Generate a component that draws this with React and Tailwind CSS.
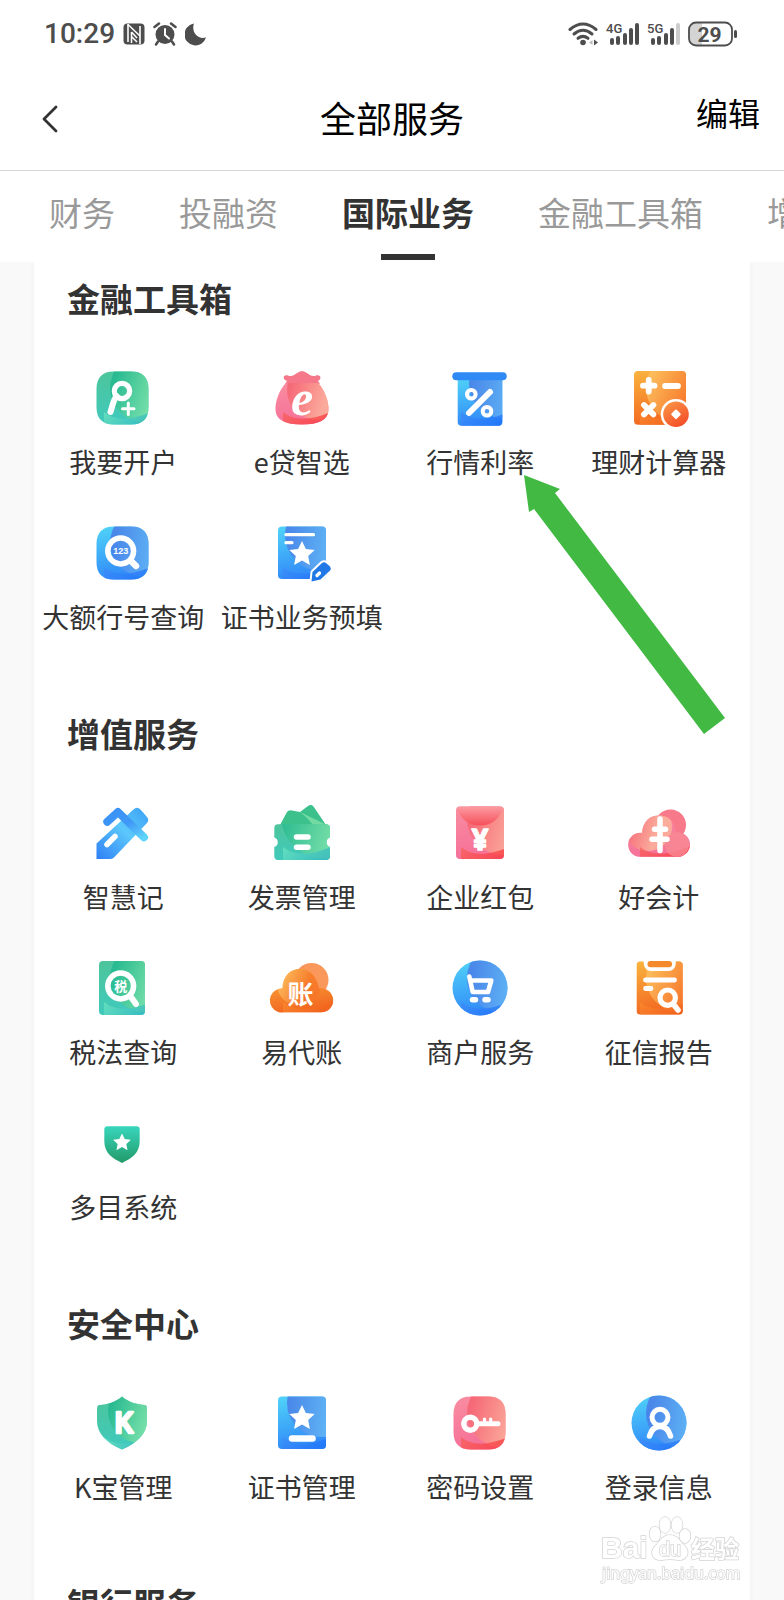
import { useState } from "react";

const STAR = "M0 -13 L3.9 -4.9 L12.7 -3.9 L6.2 2.1 L7.9 10.9 L0 6.6 L-7.9 10.9 L-6.2 2.1 L-12.7 -3.9 L-3.9 -4.9 Z";
const CJK = "'Noto Sans CJK SC', sans-serif";

const tones = {
  green: { base: ["#4cc59c", "#3fcabf"], inner: ["#22b88e", "#86e6a6"], deep: ["#6fe6c0", "#2fb4c0"] },
  blue: { base: ["#4fd0f8", "#2f86f8"], inner: ["#4a78e6", "#68b8f4"], deep: ["#3f8cf8", "#1c72fa"] },
  pink: { base: ["#f98ba0", "#f56f98"], inner: ["#f5626e", "#fcb69a"], deep: ["#f8625c", "#f9363c"] },
  orange: { base: ["#f9b03c", "#f26420"], inner: ["#fdbf62", "#f7752a"], deep: ["#fb8a2e", "#f0601c"] },
};

function Gradients() {
  return (
    <svg width="0" height="0" className="absolute" aria-hidden="true">
      <defs>
        {Object.entries(tones).map(([name, t]) => (
          <g key={name}>
            <linearGradient id={`${name}-base`} x1="0.3" y1="0" x2="0.5" y2="1">
              <stop offset="0" stopColor={t.base[0]} /><stop offset="1" stopColor={t.base[1]} />
            </linearGradient>
            <linearGradient id={`${name}-inner`} x1="0.1" y1="0.3" x2="0.7" y2="0.5">
              <stop offset="0" stopColor={t.inner[0]} /><stop offset="1" stopColor={t.inner[1]} />
            </linearGradient>
            <linearGradient id={`${name}-deep`} x1="0" y1="0" x2="1" y2="0.4">
              <stop offset="0" stopColor={t.deep[0]} /><stop offset="1" stopColor={t.deep[1]} />
            </linearGradient>
          </g>
        ))}
        <linearGradient id="pencil" x1="0" y1="1" x2="1" y2="0">
          <stop offset="0" stopColor="#2f7ff6" /><stop offset="0.55" stopColor="#5cc8fb" /><stop offset="1" stopColor="#3aa0f5" />
        </linearGradient>
        <linearGradient id="cross" x1="0" y1="0" x2="1" y2="1">
          <stop offset="0" stopColor="#3a92f6" /><stop offset="0.5" stopColor="#3f97f6" /><stop offset="1" stopColor="#5ed4fa" />
        </linearGradient>
        <linearGradient id="flap" x1="0" y1="0" x2="0" y2="1">
          <stop offset="0" stopColor="#fb9ba2" /><stop offset="1" stopColor="#f6505a" />
        </linearGradient>
        <linearGradient id="coin" x1="0" y1="0" x2="0.6" y2="1">
          <stop offset="0" stopColor="#fa9a48" /><stop offset="1" stopColor="#f4502a" />
        </linearGradient>
        <linearGradient id="badge" x1="0" y1="0" x2="0" y2="1">
          <stop offset="0" stopColor="#38d6bd" /><stop offset="1" stopColor="#229a68" />
        </linearGradient>
      </defs>
    </svg>
  );
}

// Coloured body of an icon: base, lighter disc on the right, darker swoosh at the bottom
function Body({ id, tone, d, disc = [54, 22, 34] }) {
  return (
    <>
      <clipPath id={id}><path d={d} /></clipPath>
      <path d={d} fill={`url(#${tone}-base)`} />
      <g clipPath={`url(#${id})`}>
        <circle cx={disc[0]} cy={disc[1]} r={disc[2]} fill={`url(#${tone}-inner)`} opacity="0.8" />
        <path d="M14 46 C26 56 44 54 64 45 V64 H14 Z" fill={`url(#${tone}-deep)`} opacity="0.75" />
      </g>
    </>
  );
}

const SQUIRCLE = "M24 5.5 H41 Q58.500 5.500 58.500 23 V41 Q58.500 58.500 41 58.500 H24 Q6.500 58.500 6.500 41 V23 Q6.500 5.500 24 5.500 Z";
const CARD = "M13 5.500 H53 Q57 5.500 57 9.500 V54 Q57 58 53 58 H13 Q9 58 9 54 V9.500 Q9 5.500 13 5.500 Z";
const DISC = "M33 4.500 A27.500 27.500 0 0 1 33 59.500 A27.500 27.500 0 0 1 33 4.500 Z";

const white = { fill: "none", stroke: "#fff", strokeLinecap: "round", strokeLinejoin: "round" };

const icons = {
  account: (
    <>
      <Body id="c-account" tone="green" d={SQUIRCLE} />
      <g {...white}>
        <circle cx="32" cy="25" r="7.700" strokeWidth="5.200" />
        <path d="M26.500 30 C23 35 22.500 40 20.500 46" strokeWidth="6" />
        <path d="M32.500 42.700 H44 M38.300 37 V48.500" strokeWidth="3" />
      </g>
    </>
  ),
  bag: (
    <>
      <path d="M16 18 L18 15 C13 13 14 8 19 9.500 C23 11 25 9 29 6.500 Q33 3.500 37 6.500 C41 9 43 11 47 9.500 C52 8 53 13 49 15 L51 18 Z" fill="#f4788a" />
      <Body id="c-bag" tone="pink" d="M17 17 H49 C56 24 60 36 59.500 44 C59 54 50 58.500 33 58.500 C16 58.500 7 54 6.500 44 C6 36 10 24 17 17 Z" disc={[48, 24, 30]} />
      <text x="33" y="49" textAnchor="middle" fontFamily="'Liberation Serif', serif" fontStyle="italic" fontWeight="700" fontSize="50" fill="#fff">e</text>
    </>
  ),
  rate: (
    <>
      <Body id="c-rate" tone="blue" d="M10.700 11 H55.300 V56 Q55.300 59.700 51.500 59.700 H14.500 Q10.700 59.700 10.700 56 Z" disc={[56, 18, 34]} />
      <rect x="5.300" y="6.300" width="54.400" height="8" rx="4" fill="#2f8af5" />
      <g {...white}>
        <circle cx="24.300" cy="28.300" r="4.300" strokeWidth="4" />
        <circle cx="40" cy="45.300" r="4.300" strokeWidth="4" />
        <path d="M43 26 L22 47" strokeWidth="6" />
      </g>
    </>
  ),
  calc: (
    <>
      <Body id="c-calc" tone="orange" d="M12 5 H56 Q60 5 60 9 V54.700 Q60 58.700 56 58.700 H12 Q8 58.700 8 54.700 V9 Q8 5 12 5 Z" />
      <g {...white} strokeWidth="5.800">
        <path d="M17 19.700 H28.500 M22.700 14 V25.500" />
        <path d="M39 20 H52" />
        <path d="M18 39 L27.400 48.400 M27.400 39 L18 48.400" />
      </g>
      <circle cx="50" cy="48.300" r="15.300" fill="#fff" />
      <circle cx="50" cy="48.300" r="12.800" fill="url(#coin)" />
      <path d="M50 44.500 L53.800 48.300 L50 52.100 L46.200 48.300 Z" fill="#fff" stroke="#fff" strokeWidth="2" strokeLinejoin="round" />
    </>
  ),
  bankNo: (
    <>
      <Body id="c-bankno" tone="blue" d={SQUIRCLE} />
      <g {...white}>
        <circle cx="30.700" cy="30" r="12.900" strokeWidth="5.500" />
        <path d="M41 40 L46 45" strokeWidth="6.500" />
      </g>
      <text x="30.700" y="33.200" textAnchor="middle" fontFamily="'Liberation Sans', sans-serif" fontWeight="700" fontSize="9" fill="#fff">123</text>
    </>
  ),
  prefill: (
    <>
      <Body id="c-prefill" tone="blue" d={CARD} disc={[52, 14, 36]} />
      <path d="M17 13.700 H44.500 M17 21.700 H23" {...white} strokeWidth="3.200" />
      <path d={STAR} transform="translate(33 33)" fill="#fff" />
      <path d="M42.500 60.500 L43.500 51 L53 42 Q55 40.500 57 42 L61 45.500 Q62.500 47.500 61 49.500 L51.500 58.500 Z" fill="#1f78e6" stroke="#fff" strokeWidth="4" paintOrder="stroke" strokeLinejoin="round" />
      <path d="M48 54.500 L50.500 52" {...white} strokeWidth="3.200" />
    </>
  ),
  pencil: (
    <>
      <path d="M6.500 58 V42.500 L43.500 8.500 Q47 5 50.500 8.500 L57 16 Q59.500 19 57 22 L24 56.500 Q22.500 58 20 58 Z" fill="url(#pencil)" />
      <path d="M17.300 20.700 L28 11 L54 36.300" fill="none" stroke="url(#cross)" strokeWidth="8" strokeLinecap="round" strokeLinejoin="round" />
      <path d="M17 43.500 L25 35.500" {...white} strokeWidth="5.500" />
    </>
  ),
  ticket: (
    <>
      <path d="M11 24 L18 11 Q20 8.500 23 9.500 L31 11 L39 5 Q42 3 44.500 5.500 L57 24 Z" fill="#3cc18c" />
      <path d="M31 11 L58 24 H44 Q38 16 31 11 Z" fill="#7fe0a8" opacity="0.8" />
      <Body id="c-ticket" tone="green" d="M9 23.300 H57 Q61 23.300 61 27 V36.500 A5 5 0 0 0 61 46 V55 Q61 59 57 59 H9 Q5.300 59 5.300 55 V46 A5 5 0 0 0 5.300 36.500 V27 Q5.300 23.300 9 23.300 Z" disc={[56, 14, 44]} />
      <path d="M27.500 36 H39 M27.500 46.300 H39" {...white} strokeWidth="5.500" />
    </>
  ),
  packet: (
    <>
      <Body id="c-packet" tone="pink" d={CARD} disc={[56, 18, 36]} />
      <path d="M10 7 Q10.500 5.500 13 5.500 H53 Q55.500 5.500 56 7 Q50 24.500 33 24.500 Q16 24.500 10 7 Z" fill="url(#flap)" />
      <text x="33" y="48.500" textAnchor="middle" fontFamily="'Noto Sans', sans-serif" fontWeight="700" fontSize="29" fill="#fff" stroke="#fff" strokeWidth="1.500" strokeLinejoin="round">¥</text>
    </>
  ),
  ledger: (
    <>
      <circle cx="44.500" cy="24" r="15.500" fill="#f7798a" />
      <Body id="c-ledger" tone="pink" d="M16 55.700 A12 12 0 1 1 16 32 C17 20 24 14.500 33 14.500 C42 14.500 49 20 50 31.500 A12.200 12.200 0 1 1 50.500 55.700 Z" disc={[22, 26, 24]} />
      <circle cx="51" cy="43.500" r="12.200" fill="#f78a92" opacity="0.8" />
      <path d="M34 18 V49.500 M28.500 28.300 H39.500 M26 38.300 H41" {...white} strokeWidth="5.500" />
    </>
  ),
  taxLaw: (
    <>
      <Body id="c-tax" tone="green" d="M13 5 H51 Q55 5 55 9 V55 Q55 59 51 59 H13 Q9 59 9 55 V9 Q9 5 13 5 Z" />
      <g {...white}>
        <circle cx="30.700" cy="30" r="12.900" strokeWidth="5.500" />
        <path d="M41 41 L46 48" strokeWidth="6" />
      </g>
      <text x="30.700" y="34.800" textAnchor="middle" fontFamily={CJK} fontWeight="700" fontSize="13" fill="#fff">税</text>
    </>
  ),
  agency: (
    <>
      <circle cx="42.500" cy="24" r="17" fill="#f9985a" />
      <Body id="c-agency" tone="orange" d="M15 56.300 A12 12 0 1 1 13.500 32.500 C14 19 22 13 31 13 C40 13 48 20 50 32.500 A12 12 0 1 1 52 56.300 Z" disc={[30, 28, 22]} />
      <text x="31.500" y="47.500" textAnchor="middle" fontFamily={CJK} fontWeight="700" fontSize="26" fill="#fff">账</text>
    </>
  ),
  merchant: (
    <>
      <Body id="c-merchant" tone="blue" d={DISC} />
      <g {...white}>
        <path d="M22.300 20.500 L25.700 36 H41 L44.300 24.500 H23.500" strokeWidth="4.600" />
        <path d="M25.500 43.700 H28.500 M38 43.700 H41" strokeWidth="5.500" />
      </g>
    </>
  ),
  credit: (
    <>
      <Body id="c-credit" tone="orange" d="M14 5.500 H53 Q56.700 5.500 56.700 9 V55 Q56.700 58.500 53 58.500 H14 Q10.700 58.500 10.700 55 V9 Q10.700 5.500 14 5.500 Z" />
      <path d="M17.500 4.500 H50 Q50 15 43 15 H24.500 Q17.500 15 17.500 4.500 Z" fill="#fff" />
      <rect x="21.500" y="5" width="24.500" height="6.300" rx="3" fill="#f58a2c" />
      <g {...white}>
        <path d="M19.500 24 H48.500 M19.500 32.500 H25" strokeWidth="4.800" />
        <circle cx="41.700" cy="41.700" r="7.700" strokeWidth="5.200" />
        <path d="M48 49 L52 54" strokeWidth="5.500" />
      </g>
    </>
  ),
  multi: (
    <>
      <path d="M17.500 15.300 H46.500 Q49.700 15.300 49.700 18.500 V30 C49.700 42 42 47 32 52 C22 47 14.300 42 14.300 30 V18.500 Q14.300 15.300 17.500 15.300 Z" fill="url(#badge)" />
      <path d={STAR} transform="translate(32 31.500) scale(0.7)" fill="#fff" />
    </>
  ),
  kbao: (
    <>
      <Body id="c-kbao" tone="green" d="M32 5.500 C38 11 47 13.500 55 14 Q57 14.300 57 17 V30 C57 43 47 52 32 58.500 C17 52 7 43 7 30 V17 Q7 14.300 9 14 C17 13.500 26 11 32 5.500 Z" disc={[50, 20, 32]} />
      <text x="34" y="42" textAnchor="middle" fontFamily="Roboto, sans-serif" fontWeight="500" fontSize="29" fill="#fff" stroke="#fff" strokeWidth="2.500" strokeLinejoin="round">K</text>
    </>
  ),
  cert: (
    <>
      <Body id="c-cert" tone="blue" d={CARD} disc={[52, 12, 34]} />
      <path d={STAR} transform="translate(33 27)" fill="#fff" />
      <path d="M23 47.500 H43.500" {...white} strokeWidth="6.500" />
    </>
  ),
  key: (
    <>
      <Body id="c-key" tone="pink" d={SQUIRCLE} />
      <g {...white}>
        <circle cx="23.300" cy="32.700" r="6.500" strokeWidth="5.500" />
        <path d="M31 32.700 H51" strokeWidth="5" />
        <path d="M37.500 32 V28 M43.700 32 V28" strokeWidth="3.200" />
      </g>
    </>
  ),
  login: (
    <>
      <Body id="c-login" tone="blue" d={DISC} />
      <g {...white}>
        <circle cx="34" cy="26.300" r="8" strokeWidth="5" />
        <path d="M23.500 45 C25.500 38 29 35.500 34 35.500 S42.500 38 44.500 45" strokeWidth="5.500" />
      </g>
    </>
  ),
};

const tabs = ["财务", "投融资", "国际业务", "金融工具箱", "增值服务"];

const sections = [
  {
    title: "金融工具箱",
    items: [
      ["account", "我要开户"],
      ["bag", "e贷智选"],
      ["rate", "行情利率"],
      ["calc", "理财计算器"],
      ["bankNo", "大额行号查询"],
      ["prefill", "证书业务预填"],
    ],
  },
  {
    title: "增值服务",
    items: [
      ["pencil", "智慧记"],
      ["ticket", "发票管理"],
      ["packet", "企业红包"],
      ["ledger", "好会计"],
      ["taxLaw", "税法查询"],
      ["agency", "易代账"],
      ["merchant", "商户服务"],
      ["credit", "征信报告"],
      ["multi", "多目系统"],
    ],
  },
  {
    title: "安全中心",
    items: [
      ["kbao", "K宝管理"],
      ["cert", "证书管理"],
      ["key", "密码设置"],
      ["login", "登录信息"],
    ],
  },
  { title: "银行服务", items: [] },
];

function Signal({ label, weak }) {
  return (
    <svg width="33" height="24" viewBox="0 0 33 24" className="overflow-visible" fill="#4d4d4d" aria-hidden="true">
      <text x="0" y="11" fontFamily="Roboto, sans-serif" fontWeight="500" fontSize="13">{label}</text>
      <rect x="4" y="16" width="4" height="7" rx="2" />
      <rect x="10" y="14" width="4" height="9" rx="2" />
      <rect x="17" y="11" width="4" height="12" rx="2" />
      <rect x="23" y="6" width="4" height="17" rx="2" />
      <rect x="29" y="1" width="4" height="22" rx="2" fill={weak ? "#cccccc" : "#4d4d4d"} />
    </svg>
  );
}

function StatusBar() {
  return (
    <div className="flex h-[68px] shrink-0 items-center justify-between pl-11 pr-[46px]">
      <div className="flex items-center gap-2">
        <span className="font-[Roboto,sans-serif] text-[28px] leading-8 font-medium text-[#4d4d4d]">10:29</span>
        <svg width="22" height="24" viewBox="0 0 22 24" aria-hidden="true">
          <rect x="0.500" y="1.500" width="21" height="21" rx="4" fill="#4d4d4d" />
          <path d="M5 2 V20 M17 4 V22" stroke="#fff" strokeWidth="1.600" />
          <path d="M5 2.500 L17 14 M8.500 10 V21 M8.500 10 L14 16 M8.500 14.500 L14 20" stroke="#fff" strokeWidth="1.500" fill="none" />
        </svg>
        <svg width="24" height="24" viewBox="0 0 24 24" aria-hidden="true">
          <circle cx="12" cy="12.500" r="9.500" fill="#4d4d4d" />
          <path d="M1.500 5 L6 1.500 M22.500 5 L18 1.500 M5 19.500 L3 22.500 M19 19.500 L21 22.500" stroke="#4d4d4d" strokeWidth="2.500" strokeLinecap="round" />
          <path d="M12 7 V13 L16 16.500" stroke="#fff" strokeWidth="2" fill="none" strokeLinecap="round" />
        </svg>
        <svg width="22" height="24" viewBox="0 0 22 24" aria-hidden="true">
          <path d="M9 1.500 A11 11 0 1 0 21 15.500 C12 18 6 9 9 1.500 Z" fill="#4d4d4d" />
        </svg>
      </div>
      <div className="flex items-center gap-2">
        <svg width="30" height="24" viewBox="0 0 30 24" aria-hidden="true">
          <g fill="none" stroke="#4d4d4d" strokeWidth="3" strokeLinecap="round">
            <path d="M2 7.500 Q15 -3.500 28 7.500" />
            <path d="M6 12 Q15 4.500 24 12" />
            <path d="M10 16.300 Q15 12.500 20 16.300" />
          </g>
          <circle cx="15" cy="20.500" r="2.800" fill="#4d4d4d" />
          <path d="M24.500 18 V23 L21 20.500 Z" fill="#bbbbbb" />
          <path d="M26 17.500 V23.500 L30 20.500 Z" fill="#4d4d4d" />
        </svg>
        <Signal label="4G" />
        <Signal label="5G" weak />
        <svg width="50" height="26" viewBox="0 0 50 26" aria-hidden="true">
          <path d="M7 2 H14 V24 H7 Q1 24 1 18 V8 Q1 2 7 2 Z" fill="#d4d4d4" />
          <rect x="1" y="1.500" width="43" height="23" rx="7" fill="none" stroke="#4d4d4d" strokeWidth="1.800" />
          <path d="M47.500 10.500 V15.500" stroke="#4d4d4d" strokeWidth="3" strokeLinecap="round" />
          <text x="21.500" y="20.500" textAnchor="middle" fontFamily="Roboto, sans-serif" fontWeight="700" fontSize="21" fill="#4d4d4d">29</text>
        </svg>
      </div>
    </div>
  );
}

function Watermark() {
  return (
    <svg width="148" height="72" viewBox="0 0 148 72" className="pointer-events-none absolute right-[38px] bottom-4" aria-hidden="true">
      <g fill="#fff" stroke="#d4d4d4" strokeWidth="1.500" paintOrder="stroke">
        <text x="3" y="46" fontFamily="'Liberation Sans', sans-serif" fontWeight="700" fontSize="30">Bai</text>
        <text x="93" y="46" fontFamily={CJK} fontWeight="700" fontSize="24">经验</text>
        <text x="4" y="67" fontFamily="'Noto Sans', sans-serif" fontSize="16">jingyan.baidu.com</text>
        <ellipse cx="57" cy="22" rx="5.500" ry="7.500" />
        <ellipse cx="67" cy="13" rx="5.500" ry="8" />
        <ellipse cx="79" cy="13" rx="5.500" ry="8" />
        <ellipse cx="87" cy="24" rx="5.500" ry="7" />
        <path d="M72 23 C80 23 82 30 87 34 C93 41 88 49 80 48 C75 47 69 47 64 48 C55 49 51 41 57 34 C62 30 64 23 72 23 Z" />
        <text x="61" y="44" fontFamily="'Liberation Sans', sans-serif" fontSize="20">du</text>
      </g>
    </svg>
  );
}

export default function App() {
  const [active, setActive] = useState("国际业务");

  return (
    <div className="relative flex h-screen flex-col overflow-hidden bg-white font-['Noto_Sans_CJK_SC',sans-serif] text-[#333333]">
      <Gradients />
      <StatusBar />

      <header className="grid h-[103px] shrink-0 grid-cols-[1fr_auto_1fr] items-center border-b border-[#d8d8d8] px-6 pb-1 text-black">
        <button type="button" aria-label="返回" className="justify-self-start pt-1 pl-[18px]">
          <svg width="16" height="28" viewBox="0 0 16 28" fill="none" stroke="#333333" strokeWidth="2.800" strokeLinecap="round" strokeLinejoin="round">
            <path d="M14 2 L2 14 L14 26" />
          </svg>
        </button>
        <h1 className="text-[36px] leading-[48px]">全部服务</h1>
        <button type="button" className="justify-self-end pb-2.5 text-[32px] leading-10">编辑</button>
      </header>

      {/* Pestañas de categorías */}
      <nav className="flex h-[91px] shrink-0 gap-16 overflow-hidden pl-[49px]">
        {tabs.map((t) => (
          <button key={t} type="button" onClick={() => setActive(t)}
            className={`flex shrink-0 flex-col items-center pt-[17px] text-[33px] leading-[48px] ${t === active ? "font-bold text-[#333333]" : "text-[#999999]"}`}>
            {t}
            {t === active && <span className="mt-[18px] h-[6px] w-[54px] bg-[#333333]" />}
          </button>
        ))}
      </nav>

      <main className="min-h-0 flex-1 overflow-y-auto bg-[#f9f9f9] px-[34px] [scrollbar-width:none]">
        <div className="relative flex flex-col gap-[72px] bg-white pt-3 pb-10 shadow-[0_0_6px_#0000000a]">
          {sections.map((s) => (
            <section key={s.title}>
              <h2 className="pl-[33px] text-[33px] leading-[48px] font-bold">{s.title}</h2>
              <div className="mt-11 grid grid-cols-4 gap-y-[39px] pr-0.5">
                {s.items.map(([icon, label]) => (
                  <a key={label} href="#" className="flex flex-col items-center gap-3">
                    <svg viewBox="1 0 64 64" className="size-16 overflow-visible" aria-hidden="true">{icons[icon]}</svg>
                    <span className="text-[27px] leading-10 whitespace-nowrap">{label}</span>
                  </a>
                ))}
              </div>
            </section>
          ))}

          {/* Flecha que señala 行情利率 */}
          <svg width="202" height="260" viewBox="0 0 202 260" className="pointer-events-none absolute top-[212px] right-[24px]" aria-hidden="true">
            <path d="M0 1 L36 15 L31 19 L201 244 L180 260 L10 35 L5 38 Z" fill="#41b942" />
          </svg>
        </div>
      </main>
      <Watermark />
    </div>
  );
}
